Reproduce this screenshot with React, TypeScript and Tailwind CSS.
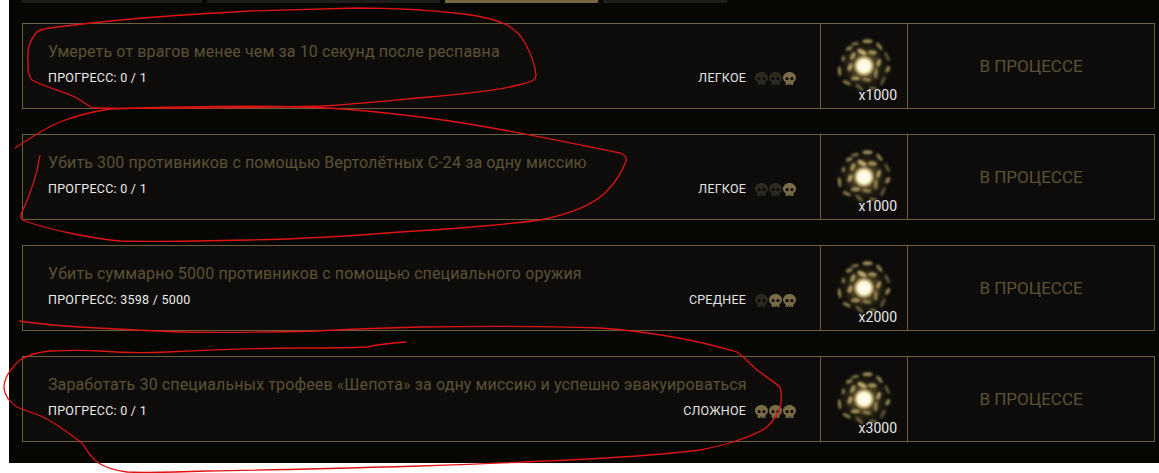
import { FaSkull } from 'react-icons/fa'

interface Quest {
  title: string
  progress: string
  difficulty: string
  level: number
  reward: string
}

const quests: Quest[] = [
  { title: 'Умереть от врагов менее чем за 10 секунд после респавна', progress: 'ПРОГРЕСС: 0 / 1', difficulty: 'ЛЕГКОЕ', level: 1, reward: 'x1000' },
  { title: 'Убить 300 противников с помощью Вертолётных С-24 за одну миссию', progress: 'ПРОГРЕСС: 0 / 1', difficulty: 'ЛЕГКОЕ', level: 1, reward: 'x1000' },
  { title: 'Убить суммарно 5000 противников с помощью специального оружия', progress: 'ПРОГРЕСС: 3598 / 5000', difficulty: 'СРЕДНЕЕ', level: 2, reward: 'x2000' },
  { title: 'Заработать 30 специальных трофеев «Шепота» за одну миссию и успешно эвакуироваться', progress: 'ПРОГРЕСС: 0 / 1', difficulty: 'СЛОЖНОЕ', level: 3, reward: 'x3000' },
]

// fragments around the orb: angle, radius, length, thickness, twist, opacity
const shards = [
  [-112, 24, 4, 1.6, 10, 0.55], [-82, 25, 5, 2, -8, 0.7], [-52, 25, 4.5, 1.7, 15, 0.65], [-22, 25, 5, 1.4, -5, 0.45],
  [8, 24, 3.5, 2, 20, 0.65], [38, 24, 5, 1.6, -12, 0.4], [68, 24, 4, 1.5, 25, 0.5], [102, 22, 5, 1.6, 30, 0.45],
  [136, 24, 4.5, 1.7, -20, 0.6], [168, 25, 5, 1.6, 6, 0.65], [200, 22, 3, 1.7, -15, 0.55], [230, 23, 3.5, 1.9, 18, 0.6],
  [-98, 14, 5, 2.4, 35, 0.85], [-58, 16, 4.5, 2.2, -25, 0.7], [-12, 15, 4, 2, 30, 0.75], [32, 14, 5, 1.7, -30, 0.6],
  [78, 14, 4.5, 1.8, 20, 0.55], [125, 15, 4.5, 2, -35, 0.7], [175, 14, 4, 2.2, 25, 0.75], [222, 15, 4, 2.2, -20, 0.7],
]

function Orb({ id }: { id: string }) {
  return (
    <svg width="64" height="64" viewBox="-32 -32 64 64">
      <defs>
        <radialGradient id={`glow-${id}`}>
          <stop offset="0%" stopColor="#e8d694" stopOpacity="0.9" />
          <stop offset="28%" stopColor="#8f7c42" stopOpacity="0.7" />
          <stop offset="60%" stopColor="#40361a" stopOpacity="0.4" />
          <stop offset="100%" stopColor="#0d0c0a" stopOpacity="0" />
        </radialGradient>
        <radialGradient id={`core-${id}`}>
          <stop offset="0%" stopColor="#ffffff" />
          <stop offset="55%" stopColor="#fdf6d2" />
          <stop offset="100%" stopColor="#f0dd98" stopOpacity="0" />
        </radialGradient>
        <filter id={`soft-${id}`}>
          <feGaussianBlur stdDeviation="0.9" />
        </filter>
      </defs>
      <circle r="30" fill={`url(#glow-${id})`} />
      <g filter={`url(#soft-${id})`}>
        {shards.map(([angle, radius, len, thick, twist, alpha], i) => (
          <ellipse
            key={i}
            cx={radius}
            cy="0"
            rx={thick}
            ry={len}
            fill="#d3bd78"
            opacity={alpha}
            transform={`rotate(${angle}) rotate(${twist} ${radius} 0)`}
          />
        ))}
      </g>
      <circle r="11" fill={`url(#core-${id})`} />
    </svg>
  )
}

function QuestRow({ quest, index }: { quest: Quest; index: number }) {
  return (
    <div className="flex h-[86px] border border-[#6b5f3c] bg-[#0d0c0a]">
      <div className="flex min-w-0 flex-1 flex-col pt-[18px] pl-[25px] pr-[24px]">
        <div className="text-[16px] leading-[20px] tracking-[0.12px] text-[#5c5134]">{quest.title}</div>
        <div className="mt-[7px] flex items-center justify-between">
          <span className="text-[12.5px] leading-[18px] tracking-[0.25px] text-[#ececec]">{quest.progress}</span>
          <div className="flex items-center">
            <span className="mr-[8px] text-[12.5px] leading-[18px] tracking-[0.2px] text-[#e4e4e4]">{quest.difficulty}</span>
            {[2, 1, 0].map((i) => (
              <FaSkull key={i} className={`ml-[1px] h-[13px] w-[13px] ${i < quest.level ? 'text-[#7a6c47]' : 'text-[#2d2a20]'}`} />
            ))}
          </div>
        </div>
      </div>
      <div className="relative flex w-[88px] items-center justify-center border-x border-[#6b5f3c]">
        <Orb id={String(index)} />
        <span className="absolute right-[10px] bottom-[5px] text-[14px] leading-[16px] text-[#e8e8e8]">{quest.reward}</span>
      </div>
      <div className="flex w-[246px] items-center justify-center pt-[1px] text-[17px] text-[#5c5134]">В ПРОЦЕССЕ</div>
    </div>
  )
}

export default function App() {
  return (
    <div className="relative h-[473px] w-[1159px] overflow-hidden bg-white pl-[9px] font-['Roboto',sans-serif]">
      <div className="h-[463px] bg-[#060603] pr-[4px] pl-[13px]">
        <div className="flex h-[3px] gap-[5px]">
          <div className="w-[180px] bg-[#1e1d19]" />
          <div className="w-[233px] bg-[#1e1d19]" />
          <div className="w-[153px] bg-[#75683f]" />
          <div className="w-[124px] bg-[#1e1d19]" />
        </div>
        <div className="mt-[20px] flex flex-col gap-[25px]">
          {quests.map((quest, i) => (
            <QuestRow key={i} quest={quest} index={i} />
          ))}
        </div>
      </div>
      {/* red marker scribbles drawn over the screenshot */}
      <svg className="pointer-events-none absolute top-0 left-0" width="1159" height="473" fill="none" stroke="#e01414" strokeWidth="1.3">
        <path d="M50 28C42 29 38 30 36 33C30 40 27 50 28 60C28 70 28 76 32 80C45 87 62 91 75 97C84 102 88 106 93 108C130 109 150 108 179 108C230 108 280 107 321 106C360 104 395 100 429 97C465 94 495 91 518 85C532 82 536 80 536 75C535 65 530 52 525 43C520 34 514 29 507 25C495 19 480 16 464 14C430 10 395 8 357 8C320 9 285 10 250 11C215 13 180 15 143 18C110 21 80 24 50 28" />
        <path d="M15 148C30 138 45 128 60 122C75 116 90 112 110 109C170 107 240 105 300 107C350 108 400 114 450 121C510 130 570 143 620 153C625 155 627 158 626 161C622 172 616 182 606 192C595 203 575 213 540 220C495 226 450 229 400 232C350 236 300 239 250 240C205 241 160 242 120 241C90 238 50 230 25 221C20 219 20 216 22 212C30 195 37 175 40 155" />
        <path d="M19 321C40 324 60 326 80 327C115 329 150 331 183 332C230 333 275 332 317 331C350 329 385 328 420 327C480 326 540 326 600 328C640 331 690 338 737 352C745 358 750 364 757 370C765 376 773 381 780 387C782 394 782 400 780 407C778 415 773 421 767 427C758 434 745 438 733 442C720 446 710 448 700 450C640 458 530 462 420 466C350 468 280 470 207 471C180 472 150 473 127 472C112 470 104 467 97 462C90 456 86 449 82 443C70 434 57 424 43 417C35 413 25 411 17 407C9 402 5 396 4 388C4 378 11 368 20 360C28 355 38 352 50 351C70 350 85 350 100 351C125 353 145 353 167 352C210 350 255 348 300 348C325 348 345 348 367 347C380 344 393 343 406 342" />
      </svg>
    </div>
  )
}
